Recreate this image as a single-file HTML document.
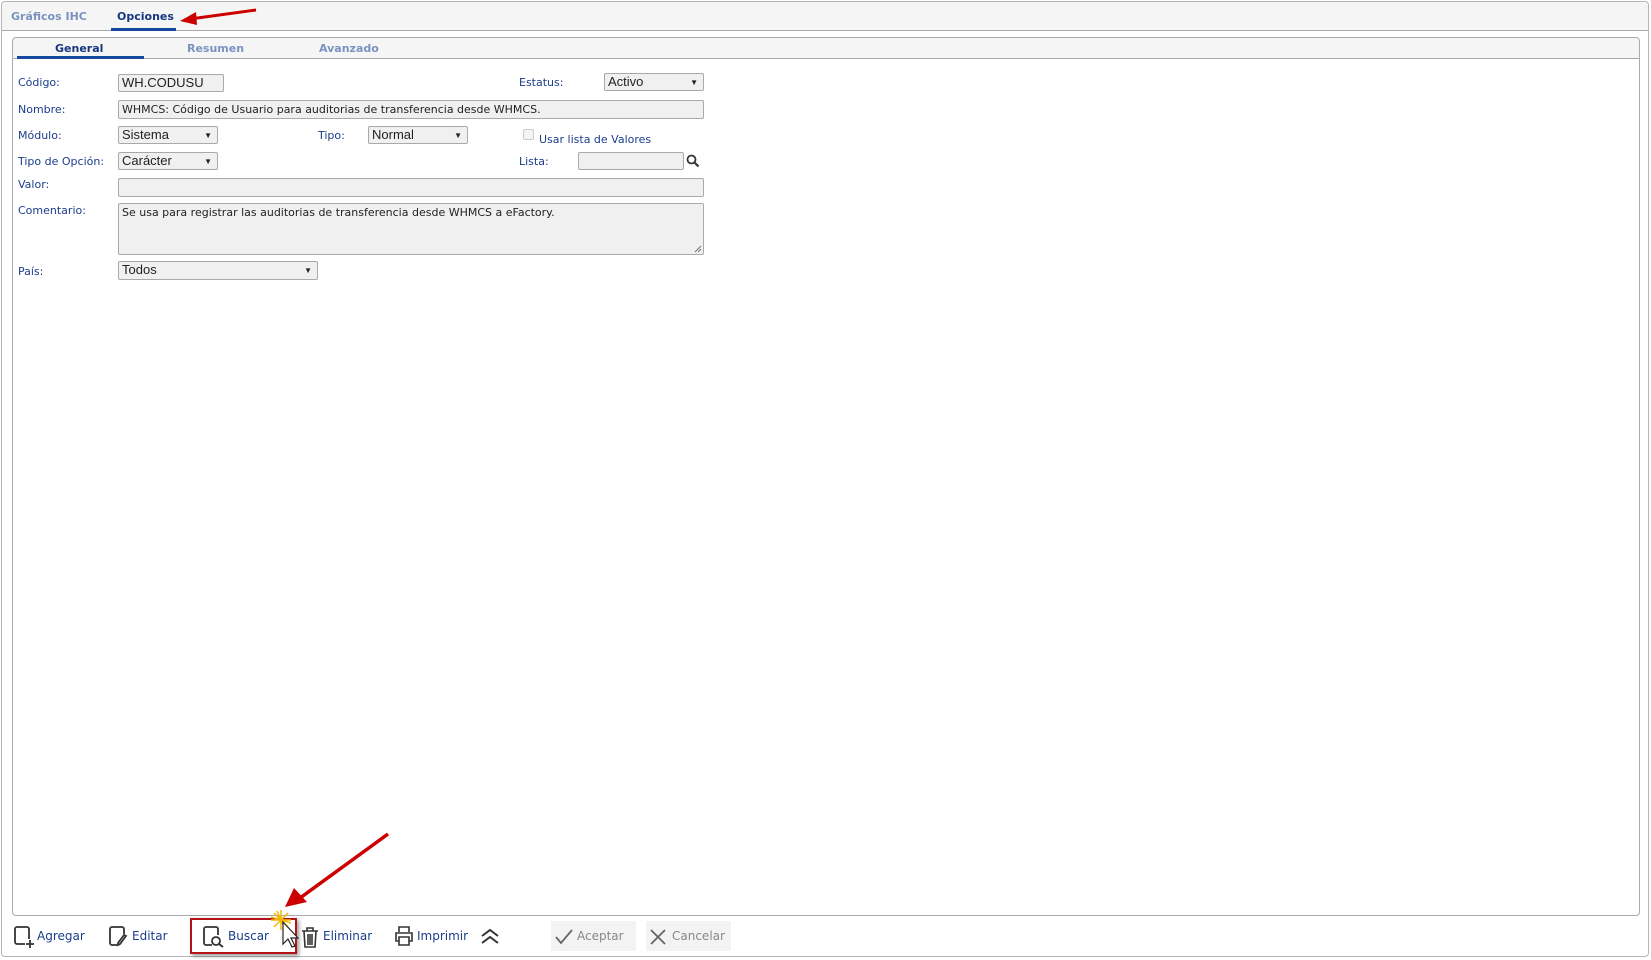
<!DOCTYPE html>
<html><head><meta charset="utf-8"><style>
*{box-sizing:border-box;margin:0;padding:0}
body{width:1651px;height:960px;background:#fff;position:relative;overflow:hidden;font-family:"DejaVu Sans",Verdana,sans-serif;font-size:11px;color:#1c3d8c}
.a{position:absolute}
.outer{left:1px;top:1px;width:1648px;height:956px;border:1px solid #b5b5b5;border-radius:4px}
.hdr{left:2px;top:2px;width:1646px;height:29px;background:#f5f5f5;border-bottom:1px solid #aaa;border-radius:4px 4px 0 0}
.inner{left:12px;top:37px;width:1628px;height:879px;border:1px solid #aaa;border-radius:4px}
.ihdr{left:13px;top:38px;width:1626px;height:21px;background:#f5f5f5;border-bottom:1px solid #aaa;border-radius:4px 4px 0 0}
.tab{font-weight:bold;font-size:11px}
.lbl{color:#1c3d8c}
.in{background:#f0f0f0;border:1px solid #a9a9a9;border-radius:2px;color:#222;padding-left:3px;white-space:nowrap;overflow:hidden}
.txt{font-family:"Liberation Sans",Arial,sans-serif;font-size:13px;line-height:16px}
.sel:after{content:"\25BC";position:absolute;right:5px;top:1px;font-size:8px}
.tb{color:#1c3d8c;font-size:12px;top:928px;line-height:16px}
</style></head><body>
<div class="a outer"></div>
<div class="a hdr"></div>
<div class="a tab" style="left:11px;top:10px;color:#7a93c0">Gráficos IHC</div>
<div class="a tab" style="left:117px;top:10px;color:#16377f">Opciones</div>
<div class="a" style="left:111px;top:28px;width:65px;height:3px;background:#1549a0"></div>
<svg class="a" style="left:170px;top:2px" width="100" height="30"><line x1="86" y1="8" x2="20" y2="17" stroke="#c00" stroke-width="3"/><polygon points="10,19 26,10 27,23" fill="#c00"/></svg>

<div class="a inner"></div>
<div class="a ihdr"></div>
<div class="a tab" style="left:55px;top:42px;color:#16377f">General</div>
<div class="a" style="left:17px;top:56px;width:127px;height:3px;background:#1549a0"></div>
<div class="a tab" style="left:187px;top:42px;color:#7a93c0">Resumen</div>
<div class="a tab" style="left:319px;top:42px;color:#7a93c0">Avanzado</div>

<div class="a lbl" style="left:18px;top:76px">Código:</div>
<div class="a in txt" style="left:118px;top:74px;width:106px;height:18px">WH.CODUSU</div>
<div class="a lbl" style="left:519px;top:76px">Estatus:</div>
<div class="a in txt sel" style="left:604px;top:73px;width:100px;height:18px">Activo</div>

<div class="a lbl" style="left:18px;top:103px">Nombre:</div>
<div class="a in" style="left:118px;top:100px;width:586px;height:19px;line-height:17px">WHMCS: Código de Usuario para auditorias de transferencia desde WHMCS.</div>

<div class="a lbl" style="left:18px;top:129px">Módulo:</div>
<div class="a in txt sel" style="left:118px;top:126px;width:100px;height:18px">Sistema</div>
<div class="a lbl" style="left:318px;top:129px">Tipo:</div>
<div class="a in txt sel" style="left:368px;top:126px;width:100px;height:18px">Normal</div>
<div class="a" style="left:523px;top:129px;width:11px;height:11px;border:1px solid #ccc;border-radius:2px;background:#f4f4f4"></div>
<div class="a lbl" style="left:539px;top:133px">Usar lista de Valores</div>

<div class="a lbl" style="left:18px;top:155px">Tipo de Opción:</div>
<div class="a in txt sel" style="left:118px;top:152px;width:100px;height:18px">Carácter</div>
<div class="a lbl" style="left:519px;top:155px">Lista:</div>
<div class="a in" style="left:578px;top:152px;width:106px;height:18px"></div>
<svg class="a" style="left:686px;top:154px" width="14" height="14"><circle cx="5.5" cy="5.5" r="4" fill="none" stroke="#333" stroke-width="1.8"/><line x1="8.5" y1="8.5" x2="12.5" y2="12.5" stroke="#333" stroke-width="2.2"/></svg>

<div class="a lbl" style="left:18px;top:178px">Valor:</div>
<div class="a in" style="left:118px;top:178px;width:586px;height:19px"></div>

<div class="a lbl" style="left:18px;top:204px">Comentario:</div>
<div class="a in" style="left:118px;top:203px;width:586px;height:52px;padding-top:2px;line-height:14px">Se usa para registrar las auditorias de transferencia desde WHMCS a eFactory.</div>
<svg class="a" style="left:694px;top:245px" width="8" height="8"><path d="M7 1L1 7M7 4L4 7" stroke="#777"/></svg>

<div class="a lbl" style="left:18px;top:265px">País:</div>
<div class="a in txt sel" style="left:118px;top:261px;width:200px;height:19px">Todos</div>

<svg class="a" style="left:14px;top:926px" width="20" height="22"><rect x="1" y="1" width="14" height="17" rx="2" fill="none" stroke="#333" stroke-width="1.8"/><rect x="11" y="13" width="9" height="9" fill="#fff"/><path d="M16 14v8M12 18h8" stroke="#333" stroke-width="1.8"/></svg>
<div class="a tb" style="left:37px">Agregar</div>
<svg class="a" style="left:109px;top:926px" width="20" height="22"><path d="M13 1H3a2 2 0 0 0-2 2v14a2 2 0 0 0 2 2h6M13 1a2 2 0 0 1 2 2v5M17 10l-6 8-2 1 0-2 6-8z" fill="none" stroke="#333" stroke-width="1.8"/></svg>
<div class="a tb" style="left:132px">Editar</div>
<div class="a" style="left:190px;top:918px;width:107px;height:36px;border:2px solid #b3141c;box-shadow:2px 2px 4px rgba(0,0,0,.4)"></div>
<svg class="a" style="left:203px;top:926px" width="22" height="22"><path d="M9 19H3a2 2 0 0 1-2-2V3a2 2 0 0 1 2-2h10a2 2 0 0 1 2 2v6" fill="none" stroke="#333" stroke-width="1.8"/><circle cx="13" cy="15" r="4" fill="none" stroke="#333" stroke-width="1.8"/><line x1="16" y1="18" x2="20" y2="21" stroke="#333" stroke-width="2"/></svg>
<div class="a tb" style="left:228px">Buscar</div>
<svg class="a" style="left:268px;top:908px" width="36" height="44"><g stroke="#f2b705" stroke-width="1.5"><path d="M13 2v20M3 12h20M6 5l14 14M20 5L6 19M9 3l8 18M3 9l20 6"/></g><path d="M15 14v22l5-5 4 8 3-1-4-8 7 0z" fill="#fff" stroke="#222" stroke-width="1.2"/></svg>
<svg class="a" style="left:301px;top:926px" width="18" height="22"><path d="M1 5h16M6 5V2h6v3M3 5l1 16h10l1-16M7 8v11M9 8v11M11 8v11" fill="none" stroke="#333" stroke-width="1.6"/></svg>
<div class="a tb" style="left:323px">Eliminar</div>
<svg class="a" style="left:394px;top:926px" width="20" height="20"><path d="M5 6V1h10v5M5 15H2V7h16v8h-3M5 11h10v8H5z" fill="none" stroke="#333" stroke-width="1.6"/></svg>
<div class="a tb" style="left:417px">Imprimir</div>
<svg class="a" style="left:480px;top:928px" width="20" height="16"><path d="M2 8l8-6 8 6M2 15l8-6 8 6" fill="none" stroke="#333" stroke-width="2"/></svg>
<div class="a" style="left:551px;top:921px;width:85px;height:30px;background:#f3f3f3"></div>
<svg class="a" style="left:555px;top:929px" width="18" height="16"><path d="M1 8l5 6L17 1" fill="none" stroke="#666" stroke-width="1.8"/></svg>
<div class="a tb" style="left:577px;color:#888">Aceptar</div>
<div class="a" style="left:646px;top:921px;width:85px;height:30px;background:#f3f3f3"></div>
<svg class="a" style="left:650px;top:929px" width="16" height="16"><path d="M1 1l14 14M15 1L1 15" stroke="#666" stroke-width="1.8"/></svg>
<div class="a tb" style="left:672px;color:#888">Cancelar</div>

<svg class="a" style="left:280px;top:830px" width="115" height="80"><line x1="108" y1="4" x2="20" y2="68" stroke="#c00" stroke-width="3.5"/><polygon points="5,77 14,58 27,72" fill="#c00"/></svg>
</body></html>
